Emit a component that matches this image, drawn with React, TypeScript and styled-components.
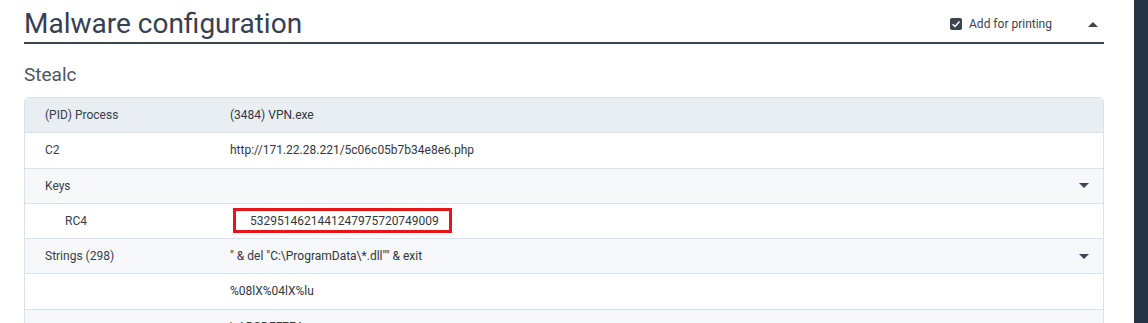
import React from 'react';
import styled, { createGlobalStyle } from 'styled-components';

const GlobalStyle = createGlobalStyle`
  html, body {
    margin: 0;
    padding: 0;
    background: #ffffff;
    font-family: Roboto, 'Liberation Sans', sans-serif;
  }
`;

const Page = styled.div`
  display: flex;
  height: 323px;
  overflow: hidden;
`;

const Main = styled.main`
  flex: 1;
  padding: 0 30px 0 24px;
  min-width: 0;
`;

const SideBar = styled.aside`
  width: 14px;
  background: #283246;
`;

const SectionHeader = styled.header`
  display: flex;
  align-items: center;
  height: 36px;
  padding-top: 6px;
  border-bottom: 2px solid #3c4452;
`;

const Title = styled.h1`
  margin: 0;
  font-size: 28px;
  line-height: 36px;
  font-weight: 400;
  color: #374050;
`;

const PrintToggle = styled.label`
  display: flex;
  align-items: center;
  gap: 7px;
  margin-left: auto;
  font-size: 12px;
  color: #3a4250;
  cursor: pointer;
`;

const CheckBox = styled.span`
  display: inline-flex;
  align-items: center;
  justify-content: center;
  width: 12px;
  height: 12px;
  border-radius: 2px;
  background: #3c4452;
`;

const CollapseButton = styled.button`
  display: flex;
  align-items: center;
  margin: 0 6px 0 36px;
  padding: 0;
  border: none;
  background: transparent;
  color: #3c4452;
  cursor: pointer;
`;

const FamilyName = styled.h2`
  margin: 20px 0 11px;
  font-size: 19px;
  line-height: 22px;
  font-weight: 400;
  color: #50565e;
`;

const ConfigTable = styled.div`
  border: 1px solid #d7e3ec;
  border-radius: 5px;
  overflow: hidden;
  font-size: 12px;
  line-height: 14.25px;
`;

const Row = styled.div<{ $tone: 'head' | 'light' | 'white' }>`
  display: grid;
  grid-template-columns: 205px 1fr;
  border-bottom: 1px solid #d7e3ec;
  background: ${(p) => (p.$tone === 'head' ? '#e9eef3' : p.$tone === 'light' ? '#f6f8fa' : '#ffffff')};
`;

const LabelCell = styled.div<{ $depth: number }>`
  padding: 10px 20px 10px ${(p) => 20 + p.$depth * 20}px;
  color: #363d4a;
`;

const ValueCell = styled.div<{ $depth: number }>`
  display: flex;
  align-items: center;
  justify-content: space-between;
  padding: 10px 14px 10px ${(p) => p.$depth * 20}px;
  color: #33373e;
  white-space: pre;
`;

const Highlight = styled.span`
  position: relative;

  &::after {
    content: '';
    position: absolute;
    top: -6px;
    bottom: -5px;
    left: -17px;
    right: -13px;
    border: 3px solid #e8141b;
  }
`;

const Caret = ({ up }: { up?: boolean }) => (
  <svg width="10" height="5" viewBox="0 0 10 5" fill="#3c4452">
    {up ? <path d="M0 5 L5 0 L10 5 Z" /> : <path d="M0 0 L10 0 L5 5 Z" />}
  </svg>
);

type ConfigRow = {
  label: string;
  value: string;
  depth?: number;
  expandable?: boolean;
  marked?: boolean;
};

const rows: ConfigRow[] = [
  { label: '(PID) Process', value: '(3484) VPN.exe' },
  { label: 'C2', value: 'http://171.22.28.221/5c06c05b7b34e8e6.php' },
  { label: 'Keys', value: '', expandable: true },
  { label: 'RC4', value: '5329514621441247975720749009', depth: 1, marked: true },
  { label: 'Strings (298)', value: '" & del "C:\\ProgramData\\*.dll"" & exit', expandable: true },
  { label: '', value: '%08lX%04lX%lu' },
  { label: '', value: '\\ ABCDEF7EA' },
];

export default function App() {
  return (
    <>
      <GlobalStyle />
      <Page>
        <Main>
          <SectionHeader>
            <Title>Malware configuration</Title>
            <PrintToggle>
              <CheckBox>
                <svg width="10" height="10" viewBox="0 0 10 10" fill="none">
                  <path d="M1.6 5.2 L4 7.5 L8.5 2.6" stroke="#ffffff" strokeWidth="1.5" />
                </svg>
              </CheckBox>
              Add for printing
            </PrintToggle>
            <CollapseButton aria-label="collapse">
              <Caret up />
            </CollapseButton>
          </SectionHeader>
          <FamilyName>Stealc</FamilyName>
          <ConfigTable>
            {rows.map((row, i) => (
              <Row key={i} $tone={i === 0 ? 'head' : i % 2 === 0 ? 'light' : 'white'}>
                <LabelCell $depth={row.depth ?? 0}>{row.label}</LabelCell>
                <ValueCell $depth={row.depth ?? 0}>
                  {row.marked ? <Highlight>{row.value}</Highlight> : <span>{row.value}</span>}
                  {row.expandable && <Caret />}
                </ValueCell>
              </Row>
            ))}
          </ConfigTable>
        </Main>
        <SideBar />
      </Page>
    </>
  );
}
